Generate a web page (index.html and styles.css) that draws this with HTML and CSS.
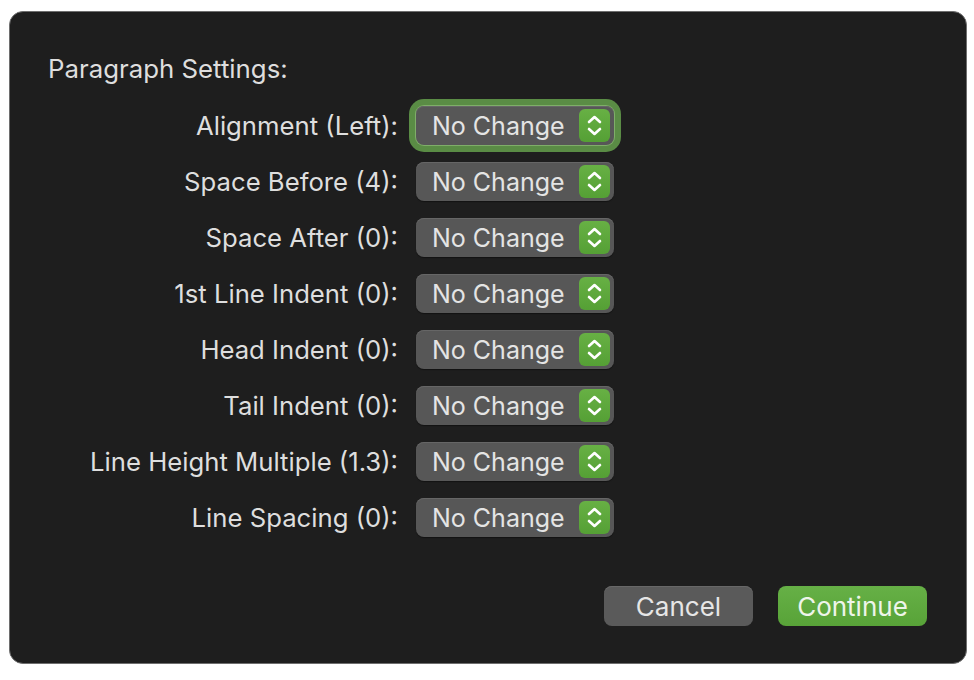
FILE: index.html
```html
<!DOCTYPE html>
<html>
<head>
<meta charset="utf-8">
<link rel="stylesheet" href="styles.css">
</head>
<body>
<div class="dialog">
  <div class="title">Paragraph Settings:</div>
  <div class="form">
    <div class="label">Alignment (Left):</div>
    <div class="popup focused"><span class="val">No Change</span><span class="stepper"><svg viewBox="0 0 31 33" width="31" height="33"><path d="M10 13 L15.5 8 L21 13 M10 20 L15.5 25 L21 20" fill="none" stroke="#fff" stroke-width="2.6" stroke-linecap="round" stroke-linejoin="round"/></svg></span></div>

    <div class="label">Space Before (4):</div>
    <div class="popup"><span class="val">No Change</span><span class="stepper"><svg viewBox="0 0 31 33" width="31" height="33"><path d="M10 13 L15.5 8 L21 13 M10 20 L15.5 25 L21 20" fill="none" stroke="#fff" stroke-width="2.6" stroke-linecap="round" stroke-linejoin="round"/></svg></span></div>

    <div class="label">Space After (0):</div>
    <div class="popup"><span class="val">No Change</span><span class="stepper"><svg viewBox="0 0 31 33" width="31" height="33"><path d="M10 13 L15.5 8 L21 13 M10 20 L15.5 25 L21 20" fill="none" stroke="#fff" stroke-width="2.6" stroke-linecap="round" stroke-linejoin="round"/></svg></span></div>

    <div class="label">1st Line Indent (0):</div>
    <div class="popup"><span class="val">No Change</span><span class="stepper"><svg viewBox="0 0 31 33" width="31" height="33"><path d="M10 13 L15.5 8 L21 13 M10 20 L15.5 25 L21 20" fill="none" stroke="#fff" stroke-width="2.6" stroke-linecap="round" stroke-linejoin="round"/></svg></span></div>

    <div class="label">Head Indent (0):</div>
    <div class="popup"><span class="val">No Change</span><span class="stepper"><svg viewBox="0 0 31 33" width="31" height="33"><path d="M10 13 L15.5 8 L21 13 M10 20 L15.5 25 L21 20" fill="none" stroke="#fff" stroke-width="2.6" stroke-linecap="round" stroke-linejoin="round"/></svg></span></div>

    <div class="label">Tail Indent (0):</div>
    <div class="popup"><span class="val">No Change</span><span class="stepper"><svg viewBox="0 0 31 33" width="31" height="33"><path d="M10 13 L15.5 8 L21 13 M10 20 L15.5 25 L21 20" fill="none" stroke="#fff" stroke-width="2.6" stroke-linecap="round" stroke-linejoin="round"/></svg></span></div>

    <div class="label">Line Height Multiple (1.3):</div>
    <div class="popup"><span class="val">No Change</span><span class="stepper"><svg viewBox="0 0 31 33" width="31" height="33"><path d="M10 13 L15.5 8 L21 13 M10 20 L15.5 25 L21 20" fill="none" stroke="#fff" stroke-width="2.6" stroke-linecap="round" stroke-linejoin="round"/></svg></span></div>

    <div class="label">Line Spacing (0):</div>
    <div class="popup"><span class="val">No Change</span><span class="stepper"><svg viewBox="0 0 31 33" width="31" height="33"><path d="M10 13 L15.5 8 L21 13 M10 20 L15.5 25 L21 20" fill="none" stroke="#fff" stroke-width="2.6" stroke-linecap="round" stroke-linejoin="round"/></svg></span></div>
  </div>
  <div class="actions">
    <button class="btn cancel">Cancel</button>
    <button class="btn primary">Continue</button>
  </div>
</div>
</body>
</html>
```

FILE: styles.css
```css
html, body {
  margin: 0;
  padding: 0;
  background: #ffffff;
}
body {
  font-family: Inter, "Liberation Sans", sans-serif;
  color: #dedede;
}
.dialog {
  box-sizing: border-box;
  margin: 11px 0 0 9px;
  width: 958px;
  height: 653px;
  background: #1e1e1e;
  border: 1px solid #6e6e6e;
  border-radius: 14px;
  padding: 42px 0 0 38px;
  display: flex;
  flex-direction: column;
}
.title {
  font-size: 25.8px;
  line-height: 30px;
  height: 30px;
}
.form {
  margin-top: 22px;
  display: grid;
  grid-template-columns: 350px 198px;
  column-gap: 18px;
  row-gap: 17px;
  align-items: center;
}
.label {
  text-align: right;
  font-size: 25.7px;
  line-height: 39px;
  white-space: nowrap;
}
.popup {
  box-sizing: border-box;
  height: 39px;
  background: #575757;
  border-radius: 8px;
  box-shadow: inset 0 1px 0 #666666, 0 1px 1px rgba(0,0,0,0.4);
  display: flex;
  align-items: center;
  padding: 0 4px 0 16px;
}
.popup.focused {
  box-shadow: inset 0 1px 0 #666666, 0 0 0 1px #7fae69, 0 0 0 7px #5a8c45;
}
.val {
  flex: 1;
  font-size: 25px;
  color: #e4e4e4;
  white-space: nowrap;
}
.stepper {
  width: 31px;
  height: 33px;
  border-radius: 6px;
  background: linear-gradient(#67b044, #55a035);
  display: flex;
}
.actions {
  margin-top: 49px;
  margin-right: 39px;
  display: flex;
  justify-content: flex-end;
  gap: 25px;
}
.btn {
  width: 149px;
  height: 40px;
  border: none;
  border-radius: 8px;
  font-family: Inter, "Liberation Sans", sans-serif;
  font-size: 26px;
  color: #e6e6e6;
  padding: 0;
}
.cancel {
  background: #5a5a5a;
  box-shadow: inset 0 1px 0 #686868;
}
.primary {
  background: linear-gradient(#66b046, #58a338);
  color: #eef5ea;
}
```
